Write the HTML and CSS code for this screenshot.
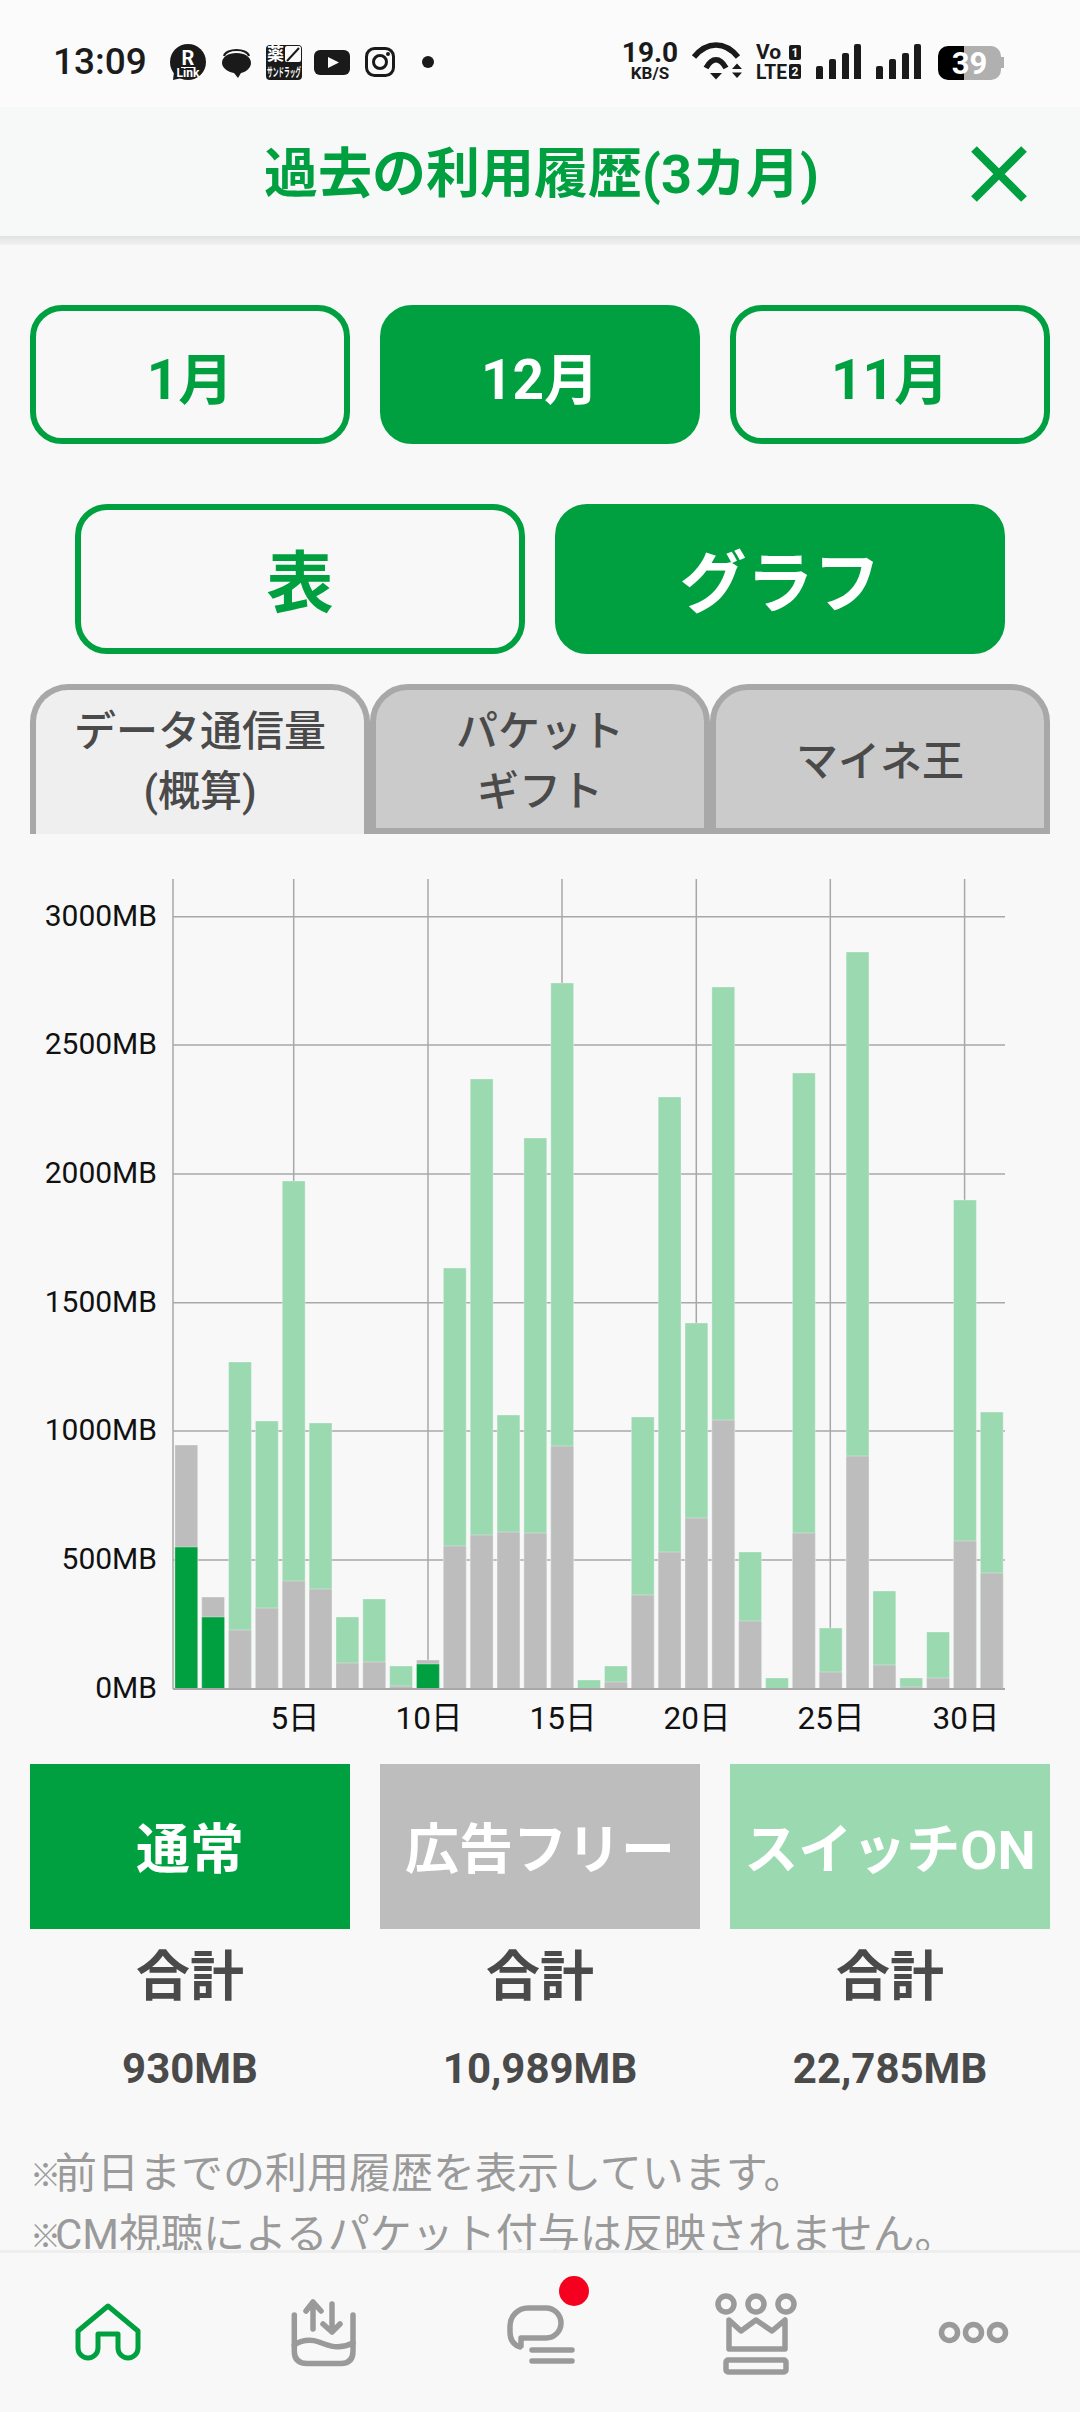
FILE: index.html
```html
<!DOCTYPE html>
<html lang="ja">
<head>
<meta charset="utf-8">
<title>過去の利用履歴(3カ月)</title>
<link rel="stylesheet" href="styles.css">
</head>
<body>
<div class="app">
  <div class="status">
    <span class="clock">13:09</span>
    <svg class="strip-left" viewBox="164 40 276 44" width="276" height="44">
      <circle cx="188" cy="62" r="18" class="ink"/>
      <path d="M174 72 L173 80 L182 78Z" class="ink"/>
      <text x="188" y="65" class="sb-r">R</text>
      <path d="M181 67.500H195" class="white-line"/>
      <text x="188" y="77" class="sb-link">Link</text>
      <path d="M224 56C226 48 247 48 249 56" class="ink-line"/>
      <path d="M236.500 53C245 53 251 57 251 63C251 68 246 72 241 73L238 78L234 73C228 72 222 68 222 63C222 57 228 53 236.500 53Z" class="ink"/>
      <rect x="266" y="45" width="36" height="35" rx="4" class="ink"/>
      <rect x="285" y="46" width="16" height="16" rx="2" class="paper"/>
      <path d="M287 61L299 48" class="ink-line"/>
      <text x="275.500" y="60" class="sb-drug">薬</text>
      <text x="284" y="77" class="sb-drug-sub" textLength="34" lengthAdjust="spacingAndGlyphs">サンドラッグ</text>
      <rect x="314" y="50" width="36" height="25" rx="6" class="ink"/>
      <path d="M328 57L339 62.500L328 68Z" class="paper"/>
      <rect x="366.500" y="48.500" width="27" height="27" rx="8" class="ink-ring"/>
      <circle cx="380" cy="62" r="6.500" class="ink-ring"/>
      <circle cx="388" cy="54" r="2" class="ink"/>
      <circle cx="428" cy="62" r="6" class="ink"/>
    </svg>
    <svg class="strip-right" viewBox="620 40 390 44" width="390" height="44">
      <text x="650" y="62" class="sb-speed">19.0</text>
      <text x="650" y="79" class="sb-unit">KB/S</text>
      <path d="M694 57C707 41 725 41 738 57" class="wifi"/>
      <path d="M706 68C712 57 720 57 726 68" class="wifi"/>
      <path d="M710 73H722L716 79.500Z" class="ink"/>
      <path d="M737 63.500L742 69H732Z M732 72.500H742L737 78Z" class="ink"/>
      <text x="756" y="59" class="sb-vo">Vo</text>
      <text x="756" y="79" class="sb-vo" textLength="31" lengthAdjust="spacingAndGlyphs">LTE</text>
      <rect x="789" y="45" width="12" height="15" rx="2" class="ink"/>
      <text x="795" y="57" class="sb-sim">1</text>
      <rect x="789" y="64" width="12" height="15" rx="2" class="ink"/>
      <text x="795" y="76" class="sb-sim">2</text>
      <path d="M816 68a2 2 0 0 1 2-2h3a2 2 0 0 1 2 2v11h-7Z M829 61a2 2 0 0 1 2-2h3a2 2 0 0 1 2 2v18h-7Z M842 55a2 2 0 0 1 2-2h3a2 2 0 0 1 2 2v24h-7Z M854 46a2 2 0 0 1 2-2h3a2 2 0 0 1 2 2v33h-7Z" class="ink"/>
      <path d="M876 68a2 2 0 0 1 2-2h3a2 2 0 0 1 2 2v11h-7Z M889 61a2 2 0 0 1 2-2h3a2 2 0 0 1 2 2v18h-7Z M902 55a2 2 0 0 1 2-2h3a2 2 0 0 1 2 2v24h-7Z M914 46a2 2 0 0 1 2-2h3a2 2 0 0 1 2 2v33h-7Z" class="ink"/>
      <path d="M964 46H948A10 10 0 0 0 938 56V70A10 10 0 0 0 948 80H964Z" class="batt-on"/>
      <path d="M964 46H991A10 10 0 0 1 1001 56V57H1004V68H1001V70A10 10 0 0 1 991 80H964Z" class="batt-off"/>
      <text x="969.500" y="74" class="sb-batt">39</text>
    </svg>
  </div>

  <header class="head">
    <h1 class="title">過去の利用履歴(3カ月)</h1>
    <svg class="close" viewBox="0 0 56 56" width="56" height="56"><path d="M3 3L53 53M53 3L3 53"/></svg>
  </header>
  <div class="head-shadow"></div>

  <main class="main">
    <div class="months">
      <div class="btn">1月</div>
      <div class="btn on">12月</div>
      <div class="btn">11月</div>
    </div>
    <div class="views">
      <div class="btn big">表</div>
      <div class="btn big on">グラフ</div>
    </div>
    <div class="tabs">
      <div class="tab active">データ通信量<br>(概算)</div>
      <div class="tab">パケット<br>ギフト</div>
      <div class="tab">マイネ王</div>
    </div>

    <svg class="chart" viewBox="0 879 1080 865" width="1080" height="865">
      <path class="grid" d="M173 879V1689M293.700 879V1689M428 879V1689M562 879V1689M696.300 879V1689M830.300 879V1689M964.600 879V1689M173 916.700H1005M173 1045H1005M173 1174H1005M173 1302.700H1005M173 1431H1005M173 1560H1005M173 1689H1005"/>
      <path class="bar-light" d="M228.600 1362h22.800V1689h-22.800zM255.450 1421h22.800V1689h-22.800zM282.300 1181h22.800V1689h-22.800zM309.150 1423h22.800V1689h-22.800zM336 1617h22.800V1689h-22.800zM362.850 1599h22.800V1689h-22.800zM389.700 1666h22.800V1689h-22.800zM443.400 1268h22.800V1689h-22.800zM470.250 1079h22.800V1689h-22.800zM497.100 1415h22.800V1689h-22.800zM523.950 1138h22.800V1689h-22.800zM550.800 983h22.800V1689h-22.800zM577.650 1680h22.800V1689h-22.800zM604.500 1666h22.800V1689h-22.800zM631.350 1417h22.800V1689h-22.800zM658.200 1097h22.800V1689h-22.800zM685.050 1323h22.800V1689h-22.800zM711.900 987h22.800V1689h-22.800zM738.750 1552h22.800V1689h-22.800zM765.600 1678h22.800V1689h-22.800zM792.450 1073h22.800V1689h-22.800zM819.300 1628h22.800V1689h-22.800zM846.150 952h22.800V1689h-22.800zM873 1591h22.800V1689h-22.800zM899.850 1678h22.800V1689h-22.800zM926.700 1632h22.800V1689h-22.800zM953.550 1200h22.800V1689h-22.800zM980.400 1412h22.800V1689h-22.800z"/>
      <path class="bar-grey" d="M174.900 1445h22.800V1689h-22.800zM201.750 1597h22.800V1689h-22.800zM228.600 1630h22.800V1689h-22.800zM255.450 1608h22.800V1689h-22.800zM282.300 1581h22.800V1689h-22.800zM309.150 1589h22.800V1689h-22.800zM336 1663h22.800V1689h-22.800zM362.850 1662h22.800V1689h-22.800zM389.700 1686h22.800V1689h-22.800zM416.550 1660h22.800V1689h-22.800zM443.400 1546h22.800V1689h-22.800zM470.250 1535h22.800V1689h-22.800zM497.100 1532h22.800V1689h-22.800zM523.950 1533h22.800V1689h-22.800zM550.800 1446h22.800V1689h-22.800zM604.500 1682h22.800V1689h-22.800zM631.350 1595h22.800V1689h-22.800zM658.200 1552h22.800V1689h-22.800zM685.050 1518h22.800V1689h-22.800zM711.900 1420h22.800V1689h-22.800zM738.750 1621h22.800V1689h-22.800zM792.450 1533h22.800V1689h-22.800zM819.300 1672h22.800V1689h-22.800zM846.150 1456h22.800V1689h-22.800zM873 1665h22.800V1689h-22.800zM899.850 1687h22.800V1689h-22.800zM926.700 1678h22.800V1689h-22.800zM953.550 1541h22.800V1689h-22.800zM980.400 1573h22.800V1689h-22.800z"/>
      <path class="bar-green" d="M174.900 1547h22.800V1689h-22.800zM201.750 1617h22.800V1689h-22.800zM416.550 1664h22.800V1689h-22.800z"/>
      <path class="axis" d="M173 1689H1005"/>
      <g class="y-labels">
        <text x="157" y="926">3000MB</text>
        <text x="157" y="1054">2500MB</text>
        <text x="157" y="1183">2000MB</text>
        <text x="157" y="1312">1500MB</text>
        <text x="157" y="1440">1000MB</text>
        <text x="157" y="1569">500MB</text>
        <text x="157" y="1698">0MB</text>
      </g>
      <g class="x-labels">
        <text x="295" y="1729">5日</text>
        <text x="429" y="1729">10日</text>
        <text x="563" y="1729">15日</text>
        <text x="697" y="1729">20日</text>
        <text x="831" y="1729">25日</text>
        <text x="966" y="1729">30日</text>
      </g>
    </svg>

    <div class="legend">
      <div class="col">
        <div class="key key-green">通常</div>
        <div class="sum-label">合計</div>
        <div class="sum-value">930MB</div>
      </div>
      <div class="col">
        <div class="key key-grey">広告フリー</div>
        <div class="sum-label">合計</div>
        <div class="sum-value">10,989MB</div>
      </div>
      <div class="col">
        <div class="key key-light">スイッチON</div>
        <div class="sum-label">合計</div>
        <div class="sum-value">22,785MB</div>
      </div>
    </div>

    <div class="notes">
      <p><span class="mark">※</span>前日までの利用履歴を表示しています。</p>
      <p><span class="mark">※</span>CM視聴によるパケット付与は反映されません。</p>
    </div>
  </main>

  <nav class="nav">
    <svg class="nav-icon home" viewBox="0 0 100 110" width="100" height="110">
      <path d="M50 28L80 53V70A10 10 0 0 1 60 70V56H40V70A10 10 0 0 1 20 70V53Z"/>
    </svg>
    <svg class="nav-icon" viewBox="0 0 100 110" width="100" height="110">
      <path d="M20.300 37V73Q20.300 85.500 33 85.500H67Q79 85.500 79 73V37"/>
      <path d="M20.300 67C28 62 36 61 45 64C55 68 65 72 79 65"/>
      <path d="M39 51V24M32 33L39 24L47 33"/>
      <path d="M58 26V54M49 46L58 54L66 46"/>
    </svg>
    <svg class="nav-icon" viewBox="0 0 100 110" width="100" height="110">
      <path d="M30 69C24 67 20 62 20 54V48A18 18 0 0 1 38 30H56A15 15 0 0 1 56 60H31V68"/>
      <path d="M42 72H82M42 83H82"/>
      <circle class="dot" cx="84" cy="13" r="15"/>
    </svg>
    <svg class="nav-icon" viewBox="0 0 100 110" width="100" height="110">
      <circle cx="20" cy="26" r="8"/>
      <circle cx="50" cy="26" r="8"/>
      <circle cx="80" cy="26" r="8"/>
      <path d="M23 42L35 53L50 42L66 53L79 42V71H23Z"/>
      <rect x="20" y="82" width="60" height="12" rx="2"/>
    </svg>
    <svg class="nav-icon" viewBox="0 0 100 110" width="100" height="110">
      <circle cx="27.500" cy="54.500" r="8"/>
      <circle cx="51.500" cy="54.500" r="8"/>
      <circle cx="75.500" cy="54.500" r="8"/>
    </svg>
  </nav>
</div>
</body>
</html>
```
FILE: styles.css
```css
* { box-sizing: border-box; margin: 0; padding: 0; }
html, body { width: 1080px; height: 2412px; overflow: hidden; }
body {
  background: #f8f8f8;
  font-family: Roboto, "Noto Sans CJK JP", sans-serif;
  color: #4a4a4a;
}
.app { display: flex; flex-direction: column; width: 1080px; height: 2412px; }

/* status bar */
.status {
  height: 107px;
  flex: none;
  background: #fbfbfb;
  display: flex;
  align-items: flex-start;
  padding: 40px 0 0 53px;
  position: relative;
}
.clock { font-size: 37px; font-weight: 500; color: #1c1c1c; width: 111px; line-height: 44px; }
.strip-left { display: block; }
.strip-right { display: block; margin-left: 180px; }
.ink { fill: #1a1a1a; }
.paper { fill: #fbfbfb; }
.ink-line { fill: none; stroke: #1a1a1a; stroke-width: 2; }
.white-line { fill: none; stroke: #fff; stroke-width: 1; }
.ink-ring { fill: none; stroke: #1a1a1a; stroke-width: 3; }
.wifi { fill: none; stroke: #1a1a1a; stroke-width: 5.5; }
.batt-on { fill: #000; }
.batt-off { fill: #b0b0b0; }
.status text { font-family: Roboto, "Noto Sans CJK JP", sans-serif; font-weight: 700; }
.sb-r { font-size: 20px; fill: #fff; text-anchor: middle; }
.sb-link { font-size: 12px; fill: #fff; text-anchor: middle; }
.sb-drug { font-size: 17px; fill: #fff; text-anchor: middle; }
.sb-drug-sub { font-size: 12px; fill: #fff; text-anchor: middle; }
.sb-speed { font-size: 28px; fill: #1a1a1a; text-anchor: middle; }
.sb-unit { font-size: 17px; fill: #1a1a1a; text-anchor: middle; }
.sb-vo { font-size: 21px; fill: #1a1a1a; }
.sb-sim { font-size: 12px; fill: #fff; text-anchor: middle; }
.sb-batt { font-size: 31px; fill: #fff; text-anchor: middle; }

/* header */
.head {
  height: 129px;
  flex: none;
  background: #f7f8f8;
  display: flex;
  align-items: center;
  justify-content: center;
  position: relative;
  padding: 6px 0 0 3px;
}
.title { font-size: 54px; font-weight: 700; color: #00a040; line-height: 1; }
.close { position: absolute; right: 53px; top: 39px; }
.close path { fill: none; stroke: #00a040; stroke-width: 8; }
.head-shadow { height: 9px; flex: none; background: linear-gradient(#e2e2e2, #f1f1f1); }

/* main */
.main { flex: 1; min-height: 0; overflow: hidden; padding-top: 60px; }
.months {
  display: grid;
  grid-template-columns: repeat(3, 320px);
  gap: 30px;
  padding-left: 30px;
}
.btn {
  height: 139px;
  border: 6px solid #00a040;
  border-radius: 32px;
  background: #f8f8f8;
  color: #00a040;
  font-size: 55px;
  font-weight: 700;
  display: flex;
  align-items: center;
  justify-content: center;
}
.btn.on { background: #00a040; color: #fff; }
.views {
  display: grid;
  grid-template-columns: repeat(2, 450px);
  gap: 30px;
  padding-left: 75px;
  margin-top: 60px;
}
.btn.big { height: 150px; font-size: 67px; padding-bottom: 3px; }

.tabs {
  display: grid;
  grid-template-columns: repeat(3, 340px);
  padding-left: 30px;
  margin-top: 30px;
}
.tab {
  height: 150px;
  border: 6px solid #a8a8a8;
  border-radius: 38px 38px 0 0;
  background: #cbcbcb;
  font-size: 42px;
  font-weight: 500;
  line-height: 60px;
  text-align: center;
  display: flex;
  align-items: center;
  justify-content: center;
  padding-top: 5px;
}
.tab.active { background: #efefef; border-bottom: 0; padding-bottom: 6px; }

/* chart */
.chart { display: block; margin-top: 45px; }
.grid { fill: none; stroke: #a8a8a8; stroke-width: 1.5; }
.axis { fill: none; stroke: #a8a8a8; stroke-width: 2; }
.bar-light, .bar-grey, .bar-green { stroke: #f8f8f8; stroke-opacity: 0.35; stroke-width: 1; }
.bar-light { fill: #9bd9b1; }
.bar-grey { fill: #bdbdbd; }
.bar-green { fill: #00a040; }
.y-labels text, .x-labels text {
  font-family: Roboto, "Noto Sans CJK JP", sans-serif;
  font-size: 30px;
  fill: #111;
}
.y-labels text { text-anchor: end; }
.x-labels text { text-anchor: middle; font-size: 31.5px; }

/* legend */
.legend {
  display: grid;
  grid-template-columns: repeat(3, 320px);
  gap: 30px;
  padding-left: 30px;
  margin-top: 20px;
}
.col { display: flex; flex-direction: column; align-items: stretch; text-align: center; }
.key {
  height: 165px;
  display: flex;
  align-items: center;
  justify-content: center;
  color: #fff;
  font-size: 54px;
  font-weight: 700;
  white-space: nowrap;
  padding-bottom: 2px;
}
.key-green { background: #00a040; }
.key-grey { background: #bdbdbd; }
.key-light { background: #9bd9b1; }
.sum-label { font-size: 54px; font-weight: 700; line-height: 97px; }
.sum-value { font-size: 42px; font-weight: 700; line-height: 85px; }

.notes { padding: 32px 0 0 30px; color: #9a9a9a; font-size: 42px; line-height: 61px; white-space: nowrap; }
.mark { display: inline-block; width: 25px; font-size: 31px; line-height: 1; text-align: left; vertical-align: 2px; }

/* bottom nav */
.nav {
  height: 162px;
  flex: none;
  border-top: 3px solid #eeeeee;
  background: #f8f8f8;
  display: grid;
  grid-template-columns: repeat(5, 216px);
  align-items: center;
  justify-items: center;
}
.nav-icon { display: block; overflow: visible; fill: none; stroke: #9a9a9a; stroke-width: 5.5; stroke-linecap: round; stroke-linejoin: round; }
.nav-icon.home { stroke: #00a040; stroke-width: 5; }
.nav-icon .dot { fill: #f5001e; stroke: none; }
```
